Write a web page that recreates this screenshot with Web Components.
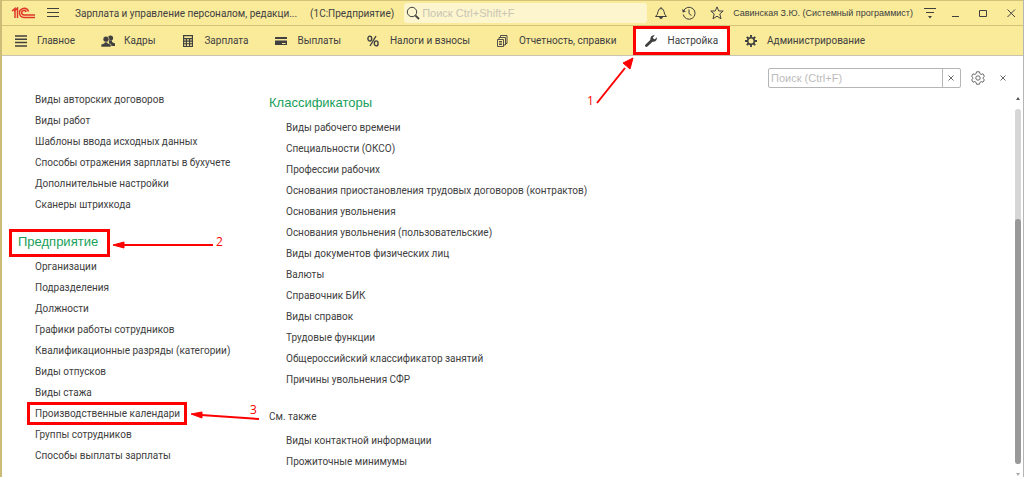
<!DOCTYPE html>
<html lang="ru">
<head>
<meta charset="utf-8">
<title>Зарплата и управление персоналом</title>
<style>
html, body { margin: 0; }
body { font: 10px/21px Roboto, "Liberation Sans", sans-serif; color: #404040; background: #fff; }
</style>
</head>
<body>
<app-window></app-window>
<script>
const define = (name, html, setup) => customElements.define(name, class extends HTMLElement {
  connectedCallback() {
    if (this.shadowRoot) return;
    this.attachShadow({ mode: 'open' }).innerHTML = html;
    if (setup) setup(this, this.shadowRoot);
  }
});

const line = 'fill="none" stroke="currentColor" stroke-width="1"';
const icons = {
  logo: [24, 12, '<g fill="none" stroke="#e0392b" stroke-width="1.5"><path d="M1 4L4 1.5V11M3 4.500L6.500 1V11"/><path d="M17.500 4.500A4.600 4.600 0 1 0 13 10.500H24"/><path d="M15.200 5A2.300 2.300 0 1 0 13 8H24"/></g>'],
  burger: [12, 12, `<path ${line} d="M0 1.500H12M0 5.500H12M0 9.500H12"/>`],
  lines: [12, 12, '<path stroke="currentColor" stroke-width="1.500" d="M0 1H12M0 4.300H12M0 7.600H12M0 11H12"/>'],
  people: [14, 12, '<g fill="currentColor"><circle cx="9.500" cy="3" r="2.600"/><path d="M8 5.500H11V7L14 8.500V11H8Z"/><g stroke="#faeb9b" stroke-width=".6"><path d="M3.500 6.500H6.500V8L10 9.500V12H0V9.500L3.500 8Z"/><circle cx="5" cy="4.200" r="3"/></g></g>'],
  calc: [12, 12, '<path fill="currentColor" fill-rule="evenodd" d="M1 0H11V12H1ZM2.200 1.200V3H9.800V1.200ZM2.200 4.200V5.600H3.800V4.200ZM5 4.200V5.600H7V4.200ZM8.200 4.200V5.600H9.800V4.200ZM2.200 6.700V8.200H3.800V6.700ZM5 6.700V8.200H7V6.700ZM8.200 6.700V8.200H9.800V6.700ZM2.200 9.300V10.900H3.800V9.300ZM5 9.300V10.900H7V9.300ZM8.200 9.300V10.900H9.800V9.300Z"/>'],
  card: [12, 12, '<path fill="currentColor" d="M0 2.500Q0 2 .5 2H11.500Q12 2 12 2.500V4H0ZM0 5.500H12V9.500Q12 10 11.500 10H.5Q0 10 0 9.500Z"/><path stroke="#faeb9b" d="M7 8.500H10.500"/>'],
  percent: [12, 12, '<g fill="none" stroke="currentColor" stroke-width="1.400"><ellipse cx="2.800" cy="3.600" rx="1.900" ry="2.500"/><ellipse cx="9.200" cy="8.400" rx="1.900" ry="2.500"/><path d="M9 1L3 11"/></g>'],
  docs: [12, 12, '<path fill="none" stroke="currentColor" stroke-width=".9" d="M4.500 2V.5H11V8.500H9.500M3 4V2.500H9.500V10H7.500M1.500 4.500H7.500V11.500H1.500ZM3 6.500H6M3 8H6M3 9.500H6"/>'],
  wrench: [12, 12, '<path d="M1.500 10.500L7 5.300" stroke="currentColor" stroke-width="2.800" stroke-linecap="round"/><path fill="currentColor" d="M9.800 .4L7.900 2.300L8.400 3.800L9.900 4.200L11.800 2.300Q12.300 5 10.300 6.300Q8.600 7.200 6.800 6.400L5.600 5.200Q4.900 3.300 6.200 1.500Q7.700 -.2 9.800 .4Z"/>'],
  cog: [12, 12, '<circle cx="6" cy="6" r="3.300" fill="none" stroke="currentColor" stroke-width="1.600"/><path stroke="currentColor" stroke-width="1.900" d="M6 0V2.500M6 9.500V12M0 6H2.500M9.500 6H12M1.800 1.800L3.500 3.500M8.500 8.500L10.200 10.200M10.200 1.800L8.500 3.500M3.500 8.500L1.800 10.200"/>'],
  lens: [14, 14, '<g fill="none" stroke="currentColor"><circle cx="6" cy="6" r="4.700"/><path stroke-width="1.800" d="M9.300 9.300L13 13"/></g>'],
  bell: [14, 14, `<path ${line} d="M1.500 10.500Q4 8.500 4 5.500Q4.500 2.500 7 2.500Q9.500 2.500 10 5.500Q10 8.500 12.500 10.500ZM7 2.500V1"/><path fill="currentColor" d="M5 11H9Q8.500 13 7 13Q5.500 13 5 11Z"/>`],
  clock: [14, 14, `<path ${line} d="M1.500 5A6 6 0 1 1 1.200 8.500M7 3.500V7.500L9.500 9.500"/><path fill="currentColor" d="M0 3L4 5.500L.8 6.500Z"/>`],
  star: [14, 14, `<path ${line} stroke-linejoin="round" d="M7 .9L8.800 5H13.200L9.800 7.900L11 12.800L7 10.200L3 12.800L4.200 7.900L.8 5H5.200Z"/>`],
  menu: [12, 12, `<path ${line} d="M0 1.500H12M2 5.500H10"/><path fill="currentColor" d="M4 9H8L6 11.500Z"/>`],
  min: [9, 9, `<path ${line} d="M1 7.500H8"/>`],
  max: [9, 9, `<path ${line} d="M.5 1.500H7.500V7.500H.5Z"/>`],
  close: [9, 9, `<path ${line} d="M.5 .5L8 8M8 .5L.5 8"/>`],
  x: [6, 6, `<path ${line} d="M.5 .5L5.500 5.500M5.500 .5L.5 5.500"/>`],
  gear: [14, 14, `<circle cx="7" cy="7" r="2.200" ${line}/><path ${line} stroke-linejoin="round" d="M5.500 .8H8.500L8.900 2.700L10.200 3.400L12 2.800L13.400 5.400L12 6.600V7.500L13.400 8.700L12 11.200L10.200 10.600L8.900 11.400L8.500 13.200H5.500L5.100 11.400L3.800 10.600L2 11.200L.6 8.700L2 7.500V6.600L.6 5.400L2 2.800L3.800 3.400L5.100 2.700Z"/>`]
};

define('ui-icon', '<style>:host{display:flex;flex:none;align-items:center;justify-content:center}svg{display:block;flex:none}</style><svg aria-hidden="true"></svg>', (el, root) => {
  const [w, h, body] = icons[el.getAttribute('name')];
  const svg = root.querySelector('svg');
  svg.setAttribute('width', w);
  svg.setAttribute('height', h);
  svg.setAttribute('viewBox', `0 0 ${w} ${h}`);
  svg.innerHTML = body;
});

define('icon-button', `<style>
:host{display:block;flex:none}
button{display:flex;align-items:center;justify-content:center;width:100%;height:20px;margin:0;padding:0;border:0;background:none;color:inherit}
</style><button type="button"></button>`, (el, root) => {
  const button = root.querySelector('button');
  button.setAttribute('aria-label', el.getAttribute('label'));
  button.innerHTML = `<ui-icon name="${el.getAttribute('icon')}"></ui-icon>`;
});

/* Numbered arrow; the drawing starts at the left top corner of its host. */
const arrows = {
  1: ['<path d="M-36 77L-8 42"/><path class="head" d="M0 32L-3 43L-10 37Z"/>', -46, 79],
  2: ['<path d="M115 16H204"/><path class="head" d="M104 16L115 13V19Z"/>', 207, 17],
  3: ['<path d="M174 13L232 17"/><path class="head" d="M164 12L175 10V16Z"/>', 223, 12]
};
define('step-mark', `<style>
:host{position:absolute;inset:0;border:3px solid #f00;pointer-events:none;z-index:2}
svg{position:absolute;top:-3px;left:-3px;width:1px;height:1px;overflow:visible}
path{stroke:#f00;stroke-width:2;fill:none}
.head{fill:#f00;stroke-width:1}
text{fill:#f00;font:12px "Open Sans",sans-serif}
</style><svg></svg>`, (el, root) => {
  const n = el.getAttribute('step');
  const [body, x, y] = arrows[n];
  root.querySelector('svg').innerHTML = `${body}<text x="${x}" y="${y}">${n}</text>`;
});

define('title-bar', `<style>
:host{display:flex;align-items:center;height:26px;padding-left:9px;border-top:1px solid #d3c278;border-bottom:1px solid #d3c278;box-sizing:border-box;background:#faeb9b;white-space:nowrap}
.title{display:flex;gap:13px;margin:0 10px 0 16px;font-size:10px;font-weight:400}
.find{display:flex;align-items:center;flex:1;min-width:80px;height:20px;padding-left:2px;border-radius:3px;background:#fdf5cd}
input{flex:1;min-width:0;padding:0 2px;border:0;background:none;font:11px "Liberation Sans",sans-serif;outline:0}
input::placeholder{color:#c9c5b4;opacity:1}
.tools{display:flex;margin-right:2px}
.tools icon-button{width:28px}
.menu{width:26px;margin-left:4px}
.user{font:9px "Liberation Sans",sans-serif}
.win{width:24px}
.win + .win{margin-left:4px}
.logo{margin-right:12px}
</style>
<ui-icon class="logo" name="logo"></ui-icon>
<icon-button icon="burger" label="Главное меню"></icon-button>
<h1 class="title"><span>Зарплата и управление персоналом, редакци...</span><span>(1С:Предприятие)</span></h1>
<label class="find"><ui-icon name="lens"></ui-icon><input type="text" placeholder="Поиск Ctrl+Shift+F" aria-label="Поиск"></label>
<div class="tools"><icon-button icon="bell" label="Уведомления"></icon-button><icon-button icon="clock" label="История"></icon-button><icon-button icon="star" label="Избранное"></icon-button></div>
<span class="user">Савинская З.Ю. (Системный программист)</span>
<icon-button class="menu" icon="menu" label="Меню"></icon-button>
<icon-button class="win" icon="min" label="Свернуть"></icon-button>
<icon-button class="win" icon="max" label="Развернуть"></icon-button>
<icon-button class="win" icon="close" label="Закрыть"></icon-button>`);

define('nav-item', `<style>
:host{display:block;position:relative}
a{display:flex;align-items:center;gap:10px;height:100%;padding:0 12px;color:inherit;text-decoration:none;white-space:nowrap}
:host([active]){margin-left:2px;background:#fff}
ui-icon{width:13px}
</style><a href="#"><slot></slot></a><slot name="mark"></slot>`, (el, root) => {
  root.querySelector('a').insertAdjacentHTML('afterbegin', `<ui-icon name="${el.getAttribute('icon')}"></ui-icon>`);
});

define('section-nav', `<style>
:host{display:block;background:#faeb9b;border-bottom:1px solid #c8c4b0}
nav{display:flex;gap:2px;height:29px}
</style><nav>
<nav-item icon="lines">Главное</nav-item>
<nav-item icon="people">Кадры</nav-item>
<nav-item icon="calc">Зарплата</nav-item>
<nav-item icon="card">Выплаты</nav-item>
<nav-item icon="percent">Налоги и взносы</nav-item>
<nav-item icon="docs">Отчетность, справки</nav-item>
<nav-item icon="wrench" active>Настройка<step-mark slot="mark" step="1"></step-mark></nav-item>
<nav-item icon="cog">Администрирование</nav-item>
</nav>`);

define('panel-tools', `<style>
:host{display:flex;justify-content:flex-end;align-items:center;padding:12px 12px 0 0;color:#6a6a6a}
.find{display:flex;width:193px;height:20px;box-sizing:border-box;border:1px solid #b5b5b5;border-radius:2px}
input{flex:1;min-width:0;border:0;padding:0 2px;background:none;font:11px "Liberation Sans",sans-serif;outline:0}
input::placeholder{color:#bcbcbc;opacity:1}
.clear{display:flex;align-items:center;width:17px;border-left:1px solid #b5b5b5}
.clear icon-button{width:16px}
.gear{width:34px}.x{width:16px}
</style>
<div class="find"><input type="text" placeholder="Поиск (Ctrl+F)" aria-label="Поиск"><div class="clear"><icon-button icon="x" label="Очистить"></icon-button></div></div>
<icon-button class="gear" icon="gear" label="Настройка"></icon-button>
<icon-button class="x" icon="x" label="Закрыть"></icon-button>`);

define('link-group', `<style>
:host{display:block}
:host(:not(:first-child)){margin-top:14px}
h2{display:flex;align-items:center;position:relative;width:max-content;height:24px;margin:0 0 3px;font:13px "Liberation Sans",sans-serif;color:#17a05a}
:host([plain]) h2{font:inherit;color:inherit;margin-bottom:2px}
.mark{position:absolute;inset:0 -12px -4px -9px}
ul{list-style:none;margin:0;padding:0 0 0 17px}
</style><h2 hidden></h2><ul><slot></slot></ul>`, (el, root) => {
  const h = root.querySelector('h2');
  const t = el.getAttribute('heading');
  if (!t) { h.remove(); return; }
  h.hidden = false;
  h.textContent = t;
  if (el.hasAttribute('step')) h.insertAdjacentHTML('beforeend', `<span class="mark"><step-mark step="${el.getAttribute('step')}"></step-mark></span>`);
});

define('link-item', `<style>
:host{display:list-item;position:relative;width:max-content;height:21px;white-space:nowrap}
a{color:inherit;text-decoration:none}
.mark{position:absolute;inset:-1px -7px -1px -8px}
</style><a href="#"><slot></slot></a>`, (el, root) => {
  el.setAttribute('role', 'listitem');
  if (el.hasAttribute('step')) root.innerHTML += `<span class="mark"><step-mark step="${el.getAttribute('step')}"></step-mark></span>`;
});

define('scroll-rail', `<style>
:host{display:flex;flex-direction:column;align-items:center;width:6px;padding:9px 2px 1px 0}
i{border:2px solid transparent;border-top:0;border-bottom:3px solid #555}
i.down{border-bottom:0;border-top:3px solid #aaa}
.track{display:flex;align-items:flex-end;flex:1;width:6px;margin:9px 0;border-radius:3px;background:#d6d6d6}
.thumb{width:6px;height:69%;border-radius:3px;background:#999}
</style><i></i><div class="track"><div class="thumb"></div></div><i class="down"></i>`);

const group = (attrs, items) => `<link-group ${attrs}>${items.map(t => t[0] === '*' ? `<link-item step="3">${t.slice(1)}</link-item>` : `<link-item>${t}</link-item>`).join('')}</link-group>`;

define('app-window', `<style>
:host{display:flex;flex-direction:column;min-height:100vh;box-sizing:border-box;border-left:2px solid #cbbd78;border-right:1px solid #b5b5b5}
.body{display:flex;flex:1}
main{display:grid;grid-template-columns:251px 1fr;flex:1;padding-left:16px;align-items:start}
.left{padding-top:1px}
.right{padding-top:2px}
</style>
<title-bar></title-bar>
<section-nav></section-nav>
<panel-tools></panel-tools>
<div class="body"><main>
<div class="left">
${group('', ['Виды авторских договоров', 'Виды работ', 'Шаблоны ввода исходных данных', 'Способы отражения зарплаты в бухучете', 'Дополнительные настройки', 'Сканеры штрихкода'])}
${group('heading="Предприятие" step="2"', ['Организации', 'Подразделения', 'Должности', 'Графики работы сотрудников', 'Квалификационные разряды (категории)', 'Виды отпусков', 'Виды стажа', '*Производственные календари', 'Группы сотрудников', 'Способы выплаты зарплаты'])}
</div>
<div class="right">
${group('heading="Классификаторы"', ['Виды рабочего времени', 'Специальности (ОКСО)', 'Профессии рабочих', 'Основания приостановления трудовых договоров (контрактов)', 'Основания увольнения', 'Основания увольнения (пользовательские)', 'Виды документов физических лиц', 'Валюты', 'Справочник БИК', 'Виды справок', 'Трудовые функции', 'Общероссийский классификатор занятий', 'Причины увольнения СФР'])}
${group('heading="См. также" plain', ['Виды контактной информации', 'Прожиточные минимумы'])}
</div>
</main><scroll-rail></scroll-rail></div>`);
</script>
</body>
</html>
